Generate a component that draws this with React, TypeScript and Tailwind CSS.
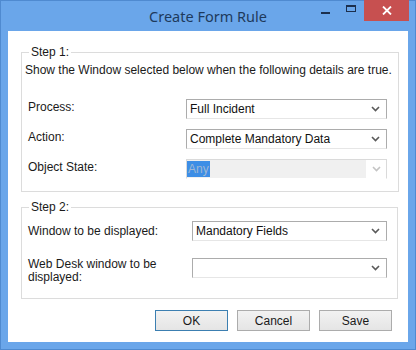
import React from 'react';

function Chevron({ light }: { light?: boolean }) {
  return (
    <svg width="9" height="6" viewBox="0 0 9 6" className="shrink-0">
      <polyline
        points="1,1 4.5,4.5 8,1"
        fill="none"
        stroke={light ? '#c4c4c4' : '#5a5a5a'}
        strokeWidth="1.6"
      />
    </svg>
  );
}

function Combo({ value, width }: { value: string; width: string }) {
  return (
    <div
      className={`${width} h-[20px] flex items-center border border-[#acacac] border-b-[#e6e6e6] bg-white pl-[3px] pr-[6px]`}
    >
      <span className="flex-1 truncate text-[#111]">{value}</span>
      <Chevron />
    </div>
  );
}

export default function App() {
  return (
    <div
      className="w-[416px] h-[350px] bg-[#6aa6ea] border border-[#4f8ad0] flex flex-col text-[12px] text-[#1a1a1a]"
      style={{ fontFamily: '"Liberation Sans", Arial, sans-serif' }}
    >
      {/* Title bar */}
      <div className="h-[30px] flex items-start relative">
        <div
          className="flex-1 text-center pt-[5px] text-[14.5px] text-[#1e3a5c]"
          style={{ fontFamily: '"Noto Sans", "Open Sans", sans-serif' }}
        >
          Create Form Rule
        </div>
        <div className="absolute right-[6px] top-[-1px] flex items-start">
          <div className="w-[26px] h-[21px] flex items-center justify-center">
            <div className="w-[9px] h-[2px] bg-[#1c2f4d] mt-[4px]" />
          </div>
          <div className="w-[26px] h-[21px] flex items-center justify-center">
            <div className="w-[10px] h-[7px] border border-t-2 border-[#1c2f4d] mt-[-4px]" />
          </div>
          <div className="w-[45px] h-[21px] bg-[#c75050] flex items-center justify-center">
            <svg width="10" height="9" viewBox="0 0 10 9">
              <path d="M1 0.5 L9 8.5 M9 0.5 L1 8.5" stroke="#fff" strokeWidth="1.8" />
            </svg>
          </div>
        </div>
      </div>

      {/* Client area */}
      <div className="mx-[7px] h-[311px] bg-white flex flex-col px-[13px] pt-[14px]">
        <fieldset className="w-[378px] border border-[#dcdcdc] px-[3px] pb-[12px]">
          <legend className="ml-[4px] px-[2px] leading-[14px]">Step 1:</legend>
          <div className="mt-[4px] leading-[14px]">
            Show the Window selected below when the following details are true.
          </div>
          <div className="mt-[22px] flex flex-col gap-[10px] pl-[3px]">
            <div className="flex items-center">
              <span className="w-[158px] mt-[-4px]">Process:</span>
              <Combo value="Full Incident" width="w-[201px]" />
            </div>
            <div className="flex items-center">
              <span className="w-[158px] mt-[-4px]">Action:</span>
              <Combo value="Complete Mandatory Data" width="w-[201px]" />
            </div>
            <div className="flex items-center">
              <span className="w-[158px] mt-[-4px]">Object State:</span>
              <div className="w-[201px] h-[20px] flex items-center border border-[#dadada] border-b-white bg-white">
                <div className="flex-1 h-full bg-[#f0f0f0] flex items-center">
                  <span className="bg-[#3d8ee6] text-[#9fb7d3] px-[1px] leading-[16px]">Any</span>
                </div>
                <div className="w-[20px] flex justify-center">
                  <Chevron light />
                </div>
              </div>
            </div>
          </div>
        </fieldset>

        <fieldset className="w-[377px] mt-[8px] border border-[#dcdcdc] px-[3px] pb-[14px]">
          <legend className="ml-[4px] px-[2px] leading-[14px]">Step 2:</legend>
          <div className="mt-[7px] flex flex-col gap-[17px] pl-[3px]">
            <div className="flex items-start">
              <span className="w-[164px] pt-[1px]">Window to be displayed:</span>
              <Combo value="Mandatory Fields" width="w-[195px]" />
            </div>
            <div className="flex items-start">
              <span className="w-[164px] leading-[13px]">
                Web Desk window to be
                <br />
                displayed:
              </span>
              <Combo value="" width="w-[195px]" />
            </div>
          </div>
        </fieldset>

        <div className="mt-[11px] flex justify-end gap-[9px] pr-[3px]">
          <button className="w-[73px] h-[21px] border border-[#3c7fb1] bg-gradient-to-b from-[#f2f2f2] to-[#e5e5e5] text-[12px]">
            OK
          </button>
          <button className="w-[73px] h-[21px] border border-[#acacac] bg-gradient-to-b from-[#f2f2f2] to-[#e5e5e5] text-[12px]">
            Cancel
          </button>
          <button className="w-[73px] h-[21px] border border-[#acacac] bg-gradient-to-b from-[#f2f2f2] to-[#e5e5e5] text-[12px]">
            Save
          </button>
        </div>
      </div>
    </div>
  );
}
